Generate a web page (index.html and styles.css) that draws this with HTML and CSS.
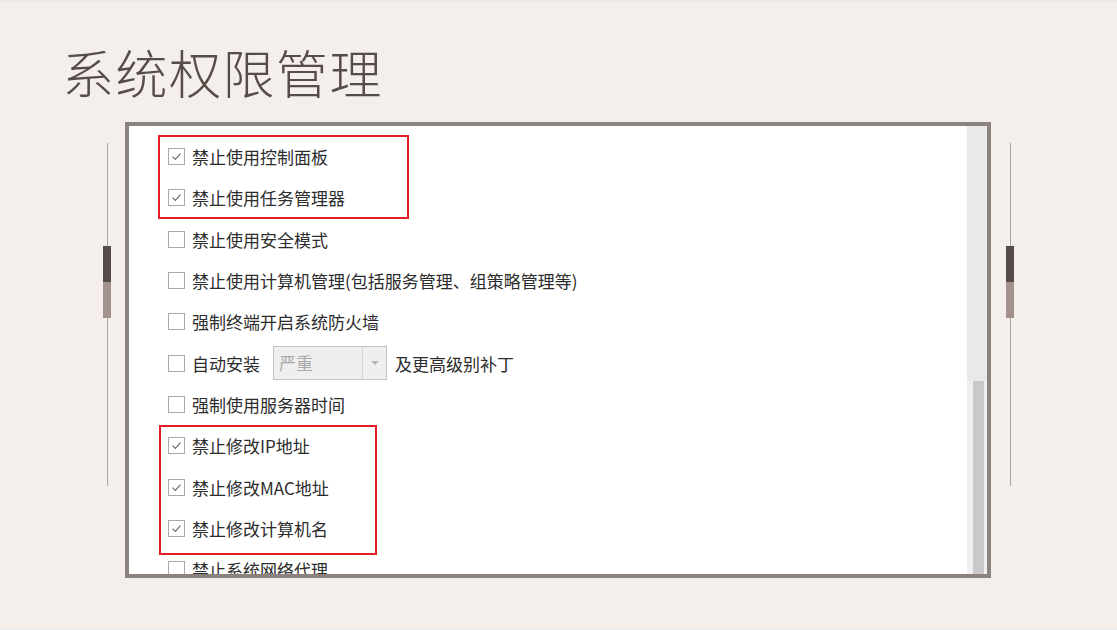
FILE: index.html
```html
<!DOCTYPE html>
<html lang="zh-CN">
<head>
  <meta charset="UTF-8">
  <meta name="viewport" content="width=device-width, initial-scale=1.0">
  <title>系统权限管理</title>
  <link rel="stylesheet" href="styles.css">
</head>
<body>
  <div class="slide">
    <h1 class="slide-title">系统权限管理</h1>

    <div class="stage">
      <!-- left decoration -->
      <div class="deco">
        <span class="deco-line deco-line-top"></span>
        <span class="deco-knob dark"></span>
        <span class="deco-knob light"></span>
        <span class="deco-line deco-line-bottom"></span>
      </div>

      <!-- screenshot frame -->
      <div class="frame">
        <div class="options">
          <label class="option"><span class="box checked"><svg viewBox="0 0 17 17"><path d="M4 8.6 L7.2 11.8 L13 5.2"/></svg></span>禁止使用控制面板</label>
          <label class="option"><span class="box checked"><svg viewBox="0 0 17 17"><path d="M4 8.6 L7.2 11.8 L13 5.2"/></svg></span>禁止使用任务管理器</label>
          <label class="option"><span class="box"></span>禁止使用安全模式</label>
          <label class="option"><span class="box"></span>禁止使用计算机管理(包括服务管理、组策略管理等)</label>
          <label class="option"><span class="box"></span>强制终端开启系统防火墙</label>
          <div class="option">
            <span class="box"></span>自动安装
            <span class="select">
              <span class="select-value">严重</span>
              <span class="select-arrow"><i></i></span>
            </span>
            及更高级别补丁
          </div>
          <label class="option"><span class="box"></span>强制使用服务器时间</label>
          <label class="option"><span class="box checked"><svg viewBox="0 0 17 17"><path d="M4 8.6 L7.2 11.8 L13 5.2"/></svg></span>禁止修改IP地址</label>
          <label class="option"><span class="box checked"><svg viewBox="0 0 17 17"><path d="M4 8.6 L7.2 11.8 L13 5.2"/></svg></span>禁止修改MAC地址</label>
          <label class="option"><span class="box checked"><svg viewBox="0 0 17 17"><path d="M4 8.6 L7.2 11.8 L13 5.2"/></svg></span>禁止修改计算机名</label>
          <label class="option"><span class="box"></span>禁止系统网络代理</label>
        </div>

        <div class="scrollbar">
          <div class="scroll-thumb"></div>
        </div>

        <!-- red annotation boxes -->
        <div class="mark mark-top"></div>
        <div class="mark mark-bottom"></div>
      </div>

      <!-- right decoration -->
      <div class="deco deco-right">
        <span class="deco-line deco-line-top"></span>
        <span class="deco-knob dark"></span>
        <span class="deco-knob light"></span>
        <span class="deco-line deco-line-bottom"></span>
      </div>
    </div>
  </div>
</body>
</html>
```

FILE: styles.css
```css
/* General Styles */
html, body {
  margin: 0;
  padding: 0;
}

body {
  width: 1117px;
  height: 630px;
  overflow: hidden;
  background-color: #f4efeb;
  font-family: "Noto Sans CJK SC", "Noto Sans", sans-serif;
}

.slide {
  box-sizing: border-box;
  height: 630px;
  border-top: 2px solid #eaeaea;
  border-bottom: 2px solid #ebebeb;
}

/* Title */
.slide-title {
  margin: 44px 0 0 62px;
  font-size: 52px;
  line-height: 52px;
  font-weight: 300;
  color: #564c48;
  letter-spacing: 1.5px;
}

/* Stage: decorations + frame */
.stage {
  display: flex;
  justify-content: center;
  align-items: flex-start;
  gap: 14px;
  margin-top: 24px;
}

.deco {
  width: 8px;
  margin-top: 21px;
  display: flex;
  flex-direction: column;
  align-items: center;
}

.deco-right {
  margin-left: 1px;
}

.deco-line {
  width: 1px;
  background-color: #aea4a0;
}

.deco-line-top {
  height: 103px;
}

.deco-line-bottom {
  height: 168px;
}

.deco-knob {
  width: 8px;
  height: 36px;
}

.deco-knob.dark {
  background-color: #544c49;
}

.deco-knob.light {
  background-color: #a2918e;
}

/* Frame */
.frame {
  position: relative;
  box-sizing: border-box;
  width: 866px;
  height: 456px;
  border: 4px solid #8c837e;
  background-color: #fff;
  display: flex;
  overflow: hidden;
}

.options {
  flex: 1;
  padding: 10px 0 0 39px;
}

.option {
  display: flex;
  align-items: center;
  height: 41.3px;
  font-size: 17px;
  color: #2c2c2c;
  white-space: nowrap;
}

.box {
  box-sizing: border-box;
  width: 17px;
  height: 17px;
  margin-right: 7px;
  border: 1px solid #a9a9a9;
  background-color: #fff;
  flex-shrink: 0;
}

.box svg {
  display: block;
  width: 15px;
  height: 15px;
}

.box svg path {
  fill: none;
  stroke: #6e6e6e;
  stroke-width: 1.4;
}

/* Disabled dropdown */
.select {
  box-sizing: border-box;
  display: flex;
  width: 114px;
  height: 34px;
  margin: 0 8px 0 13px;
  border: 1px solid #c4c4c4;
  background-color: #efefef;
}

.select-value {
  flex: 1;
  padding-left: 5px;
  line-height: 32px;
  color: #a9a9a9;
  font-size: 17px;
}

.select-arrow {
  width: 23px;
  border-left: 1px solid #d8d8d8;
  display: flex;
  justify-content: center;
  align-items: center;
}

.select-arrow i {
  width: 0;
  height: 0;
  border-left: 4px solid transparent;
  border-right: 4px solid transparent;
  border-top: 4px solid #b5b5b5;
}

/* Scrollbar */
.scrollbar {
  width: 20px;
  background-color: #e9e9e9;
  display: flex;
  flex-direction: column;
  justify-content: flex-end;
}

.scroll-thumb {
  height: 193px;
  background-color: #c9c9c9;
  border-left: 6px solid #f0f0f0;
  border-right: 3px solid #f0f0f0;
}

/* Red annotation boxes */
.mark {
  position: absolute;
  box-sizing: border-box;
  border: 2px solid #e41e26;
}

.mark-top {
  left: 29px;
  top: 9px;
  width: 251px;
  height: 84px;
}

.mark-bottom {
  left: 30px;
  top: 299px;
  width: 218px;
  height: 130px;
}
```
